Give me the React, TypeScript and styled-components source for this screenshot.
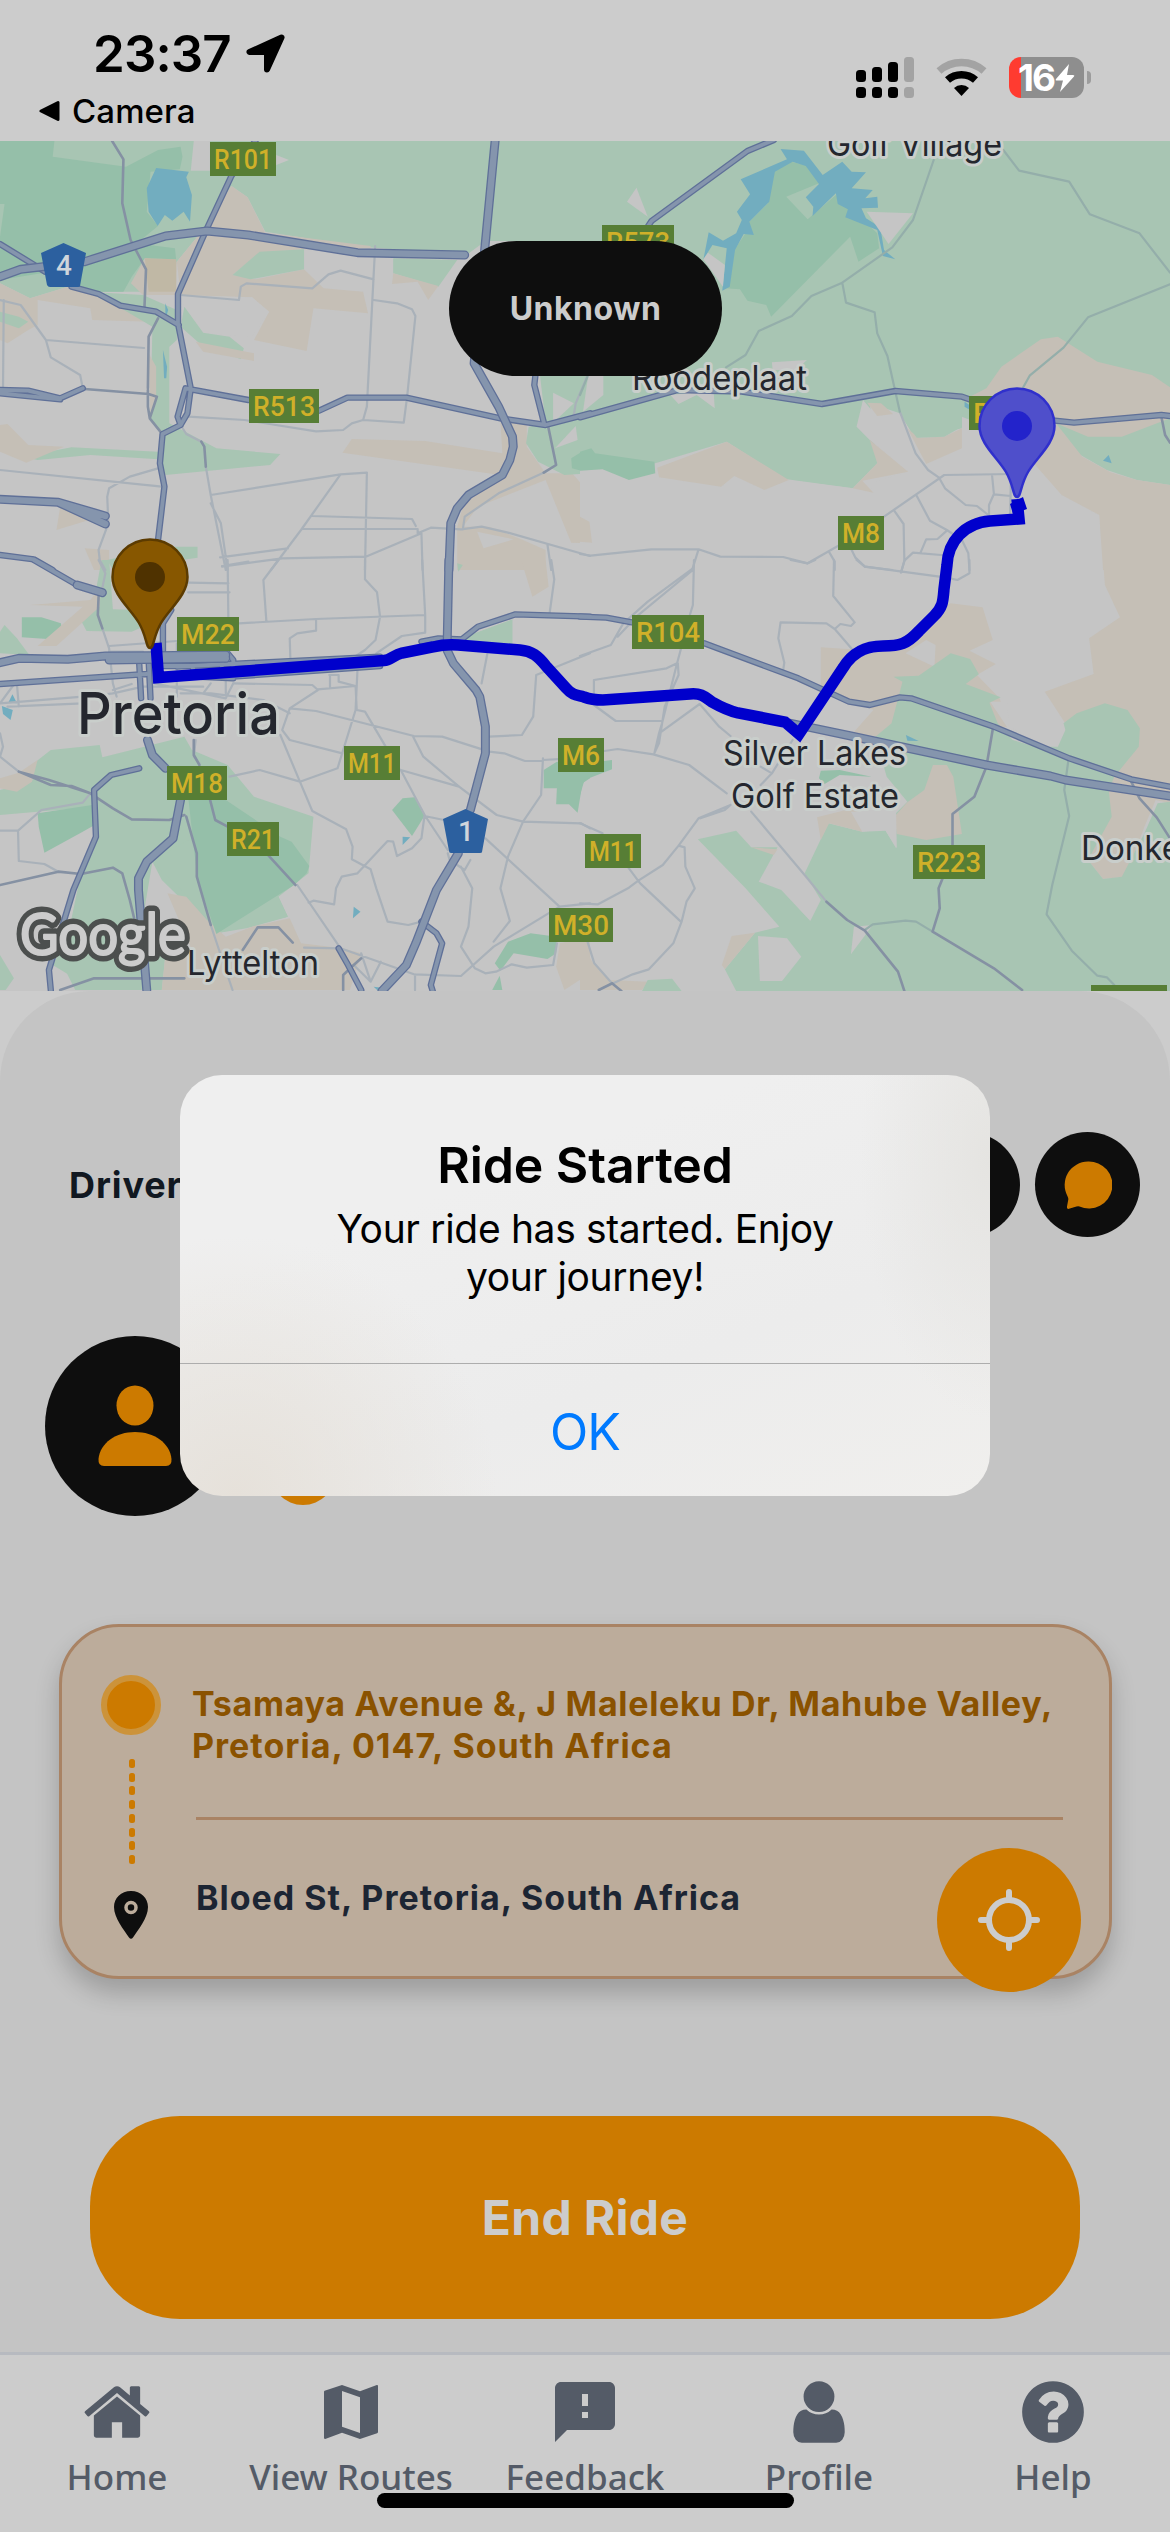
import React from 'react';
import styled, { createGlobalStyle } from 'styled-components';

const GlobalStyle = createGlobalStyle`
  * { box-sizing: border-box; }
  body { margin: 0; background: #cccccc; font-family: Inter, "Liberation Sans", sans-serif; }
`;

const Screen = styled.div`
  position: relative;
  display: flex;
  flex-direction: column;
  width: 1170px;
  height: 2532px;
  overflow: hidden;
  background: #cccccc;
`;

/* ---------- status bar ---------- */

const StatusBar = styled.header`
  display: flex;
  justify-content: space-between;
  height: 141px;
  padding: 0 79px 0 39px;
  color: #000;
`;

const StatusLeft = styled.div`
  display: flex;
  flex-direction: column;
  padding-top: 28px;
`;

const Clock = styled.div`
  display: flex;
  align-items: center;
  gap: 15px;
  height: 52px;
  padding-left: 54px;
  font-size: 51px;
  font-weight: 600;
  line-height: 52px;
  letter-spacing: -0.9px;
`;

const BackLink = styled.div`
  display: flex;
  align-items: center;
  gap: 12px;
  height: 46px;
  margin-top: 8px;
  font-size: 33px;
  font-weight: 500;
  line-height: 46px;
  letter-spacing: 0.1px;
`;

const StatusRight = styled.div`
  display: flex;
  align-items: flex-start;
  gap: 22px;
  padding-top: 57px;
`;

const Battery = styled.div`
  display: flex;
  align-items: center;
  gap: 3px;
`;

const BatteryBody = styled.div`
  display: flex;
  align-items: center;
  justify-content: center;
  gap: 1px;
  width: 75px;
  height: 41px;
  border-radius: 12px;
  background: linear-gradient(90deg, #ff3b30 12px, #8e8e8e 12px);
  color: #fff;
  font-size: 37px;
  font-weight: 700;
  letter-spacing: -2px;
`;

const BatteryCap = styled.span`
  width: 4px;
  height: 13px;
  border-radius: 0 6px 6px 0;
  background: #9c9c9c;
`;

/* ---------- map ---------- */

const MapPane = styled.section`
  position: relative;
  height: 850px;
  background: #c5c5c5;
  overflow: hidden;
  svg { display: block; }
`;

const MapPill = styled.div`
  position: absolute;
  top: 100px;
  left: 449px;
  display: flex;
  align-items: center;
  justify-content: center;
  width: 273px;
  height: 135px;
  border-radius: 68px;
  background: #0e0e0e;
  color: #cccccc;
  font-size: 32px;
  font-weight: 700;
  letter-spacing: 0.5px;
`;

type Tile = 'nw' | 'ne' | 'sw' | 'se';

const tileShift: Record<Tile, string> = {
  nw: 'translate(0 -1)',
  ne: 'translate(580 -1)',
  sw: 'translate(0 419)',
  se: 'translate(580 419)',
};

const tint = {
  green: '#a8c5b3',
  forest: '#95bfa9',
  sand: '#c5bfb6',
  ochre: '#c0b8a5',
  land: '#c5c5c5',
  water: '#72adbf',
};

type Area = [Tile, keyof typeof tint, string];

const areas: Area[] = [
  ['nw', 'green', '0,0 1568,0 1568,303 1290,303 1240,345 960,320 705,275 658,172 615,138 545,262 470,365 450,455 330,455 230,455 180,440 80,475 0,430'],
  ['nw', 'forest', '0,0 145,0 140,50 335,80 420,30 480,20 485,50 478,88 400,95 390,215 420,258 385,290 360,310 465,325 468,358 385,355 350,410 328,455 230,455 110,400 0,420'],
  ['nw', 'green', '0,192 12,192 0,290'],
  ['nw', 'land', '515,3 558,3 558,92 507,92'],
  ['nw', 'land', '734,45 768,60 734,75'],
  ['nw', 'sand', '545,262 615,138 658,172 705,278 985,318 985,325 808,328 690,338 618,405 680,418 808,388 860,445 965,455 978,520 833,505 815,633 675,600 715,515 670,472 480,465 470,365'],
  ['nw', 'sand', '385,355 470,365 468,465 380,465 348,430'],
  ['nw', 'ochre', '385,355 468,358 468,455 395,455'],
  ['nw', 'green', '690,335 808,328 808,388 665,418 618,405'],
  ['nw', 'land', '480,468 670,472 715,515 670,590 540,580 490,500'],
  ['nw', 'sand', '0,430 80,475 180,440 250,460 315,495 400,545 245,540 240,505 100,480 100,555 75,570 20,610 0,600'],
  ['nw', 'green', '0,515 50,530 75,545 50,565 0,545'],
  ['nw', 'green', '230,455 380,465 470,510 470,600 450,620 450,850 500,880 575,925 745,942 718,975 440,1005 420,940 430,880 400,840 405,560 315,500'],
  ['nw', 'green', '490,500 540,578 610,590 648,625 640,658 530,610 480,560'],
  ['nw', 'sand', '520,605 675,640 675,663 540,635'],
  ['nw', 'sand', '395,640 415,680 415,770 400,840'],
  ['nw', 'green', '60,950 190,922 420,935 420,958 240,945 100,960'],
  ['nw', 'sand', '0,855 20,852 75,915 170,920 70,968 0,935'],
  ['nw', 'sand', '935,897 1130,903 1335,940 1330,845 1400,850 1400,920 1450,1000 1520,1000 1568,1060 1568,1210 1518,1208 1450,1020 1270,1100 1230,1160 1300,1160 1390,1200 1450,1230 1450,1290 1215,1290 1215,1160 1240,1060 1330,1005 910,938'],
  ['nw', 'land', '1268,1175 1365,1198 1285,1225'],
  ['nw', 'green', '1435,705 1568,705 1568,1000 1500,1005 1430,965 1398,910 1405,860 1450,850'],
  ['nw', 'land', '1470,758 1525,790 1470,848'],
  ['nw', 'land', '1530,858 1535,900 1475,925'],
  ['nw', 'forest', '1568,920 1518,955 1520,985 1568,1000'],
  ['nw', 'green', '1045,355 1215,360 1165,440 1045,400'],
  ['nw', 'sand', '1045,400 1165,438 1138,480 1110,425 1042,432'],
  ['nw', 'sand', '160,1100 280,1125 150,1170'],
  ['nw', 'sand', '225,1225 290,1230 290,1290 250,1290'],
  ['nw', 'green', '440,1220 525,1220 525,1253 300,1290 285,1260'],
  ['nw', 'water', '415,84 502,95 495,112 510,165 505,245 488,215 458,242 438,225 419,258 395,215 390,145'],
  ['nw', 'water', '439,490 447,510 440,535'],
  ['nw', 'water', '433,630 444,680 442,715 436,715'],

  ['ne', 'green', '0,0 1568,0 1568,1035 1480,1020 1400,990 1330,945 1265,860 1180,960 890,895 850,820 770,790 790,970 725,1045 550,1020 390,905 200,970 0,990'],
  ['ne', 'land', '0,990 60,988 130,1020 200,1000 210,1012 375,1040 410,1008 490,1050 550,1018 725,1045 780,1058 770,1030 872,995 770,900 735,860 752,780 788,828 848,820 890,895 1015,865 1015,830 1060,850 1210,975 1280,1065 1380,1125 1390,1290 0,1290'],
  ['ne', 'sand', '205,983 390,905 555,1020 490,1050 410,1008 375,1040 210,1012'],
  ['ne', 'sand', '770,900 872,995 750,1022 780,1058 725,1045 790,970'],
  ['ne', 'sand', '763,788 800,790 832,822 790,828'],
  ['ne', 'sand', '870,865 900,893 968,890 1015,865 1015,925 920,972'],
  ['ne', 'green', '848,820 1015,820 1015,860 968,890 895,893'],
  ['ne', 'sand', '1040,768 1080,745 1120,680 1225,598 1270,590 1375,665 1520,705 1568,742 1568,835 1440,890 1350,890 1265,850 1335,950 1410,997 1480,1020 1568,1035 1568,1290 1390,1290 1380,1125 1280,1065 1210,975 1130,850'],
  ['ne', 'sand', '0,1130 25,1145 32,1208 0,1205'],
  ['ne', 'forest', '0,935 30,925 40,940 198,965 200,1000 130,1020 60,988 0,992'],
  ['ne', 'forest', '515,95 560,65 600,75 635,130 548,170 605,238 680,165 790,280 795,325 740,365 718,290 508,530 495,495 445,482 425,448 385,445 410,330 440,280 450,245 500,190'],
  ['ne', 'water', '533,27 595,32 645,105 697,65 722,95 760,97 722,145 778,150 758,175 790,170 792,203 748,205 760,235 798,262 808,330 838,358 805,348 790,270 705,232 712,208 685,192 680,160 618,228 620,200 600,172 635,132 600,78 565,65 518,95 503,185 450,245 462,285 435,282 412,330 398,440 378,452 390,325 352,315 328,358 342,277 380,302 415,280 430,240 417,215 452,163 427,118 550,58'],
  ['ne', 'land', '150,143 180,230 125,185'],
  ['ne', 'land', '762,215 885,220 820,312'],
  ['ne', 'land', '340,338 385,375 380,440 328,358'],
  ['ne', 'land', '22,705 62,705 62,765 8,815'],
  ['ne', 'land', '510,667 603,660 575,690 512,690'],
  ['ne', 'land', '240,765 355,750 358,805 310,765 262,792'],
  ['ne', 'water', '1405,945 1413,970 1390,962'],
  ['ne', 'water', '1022,785 1035,795 1033,808 1022,800'],

  ['sw', 'green', '0,690 85,665 90,610 135,570 265,555 272,592 490,530 510,570 605,615 675,710 833,770 820,940 740,1010 765,1070 655,1105 575,1120 430,960 405,905 385,1040 380,1290 250,1290 140,1215 180,1130 215,940 250,870 255,740 100,755 0,765'],
  ['sw', 'forest', '100,760 245,735 260,790 215,818 118,878 103,800'],
  ['sw', 'green', '270,1100 440,1180 430,1290 200,1290 160,1200'],
  ['sw', 'green', '405,905 500,1010 560,1095 575,1120 660,1100 765,1070 740,1010 620,900 500,840'],
  ['sw', 'sand', '445,1000 495,1010 550,1080 600,1130 670,1100 770,1075 800,1150 910,1165 960,1180 930,1290 430,1290 440,1180 510,1170'],
  ['sw', 'forest', '500,710 600,720 745,830 775,845 822,918 815,940 782,975 575,1122 525,960'],
  ['sw', 'green', '270,0 290,0 300,148 370,150 380,200 350,215 230,213 217,185 250,120'],
  ['sw', 'forest', '58,172 110,172 162,190 165,240 58,232'],
  ['sw', 'green', '12,195 45,235 78,285 0,280 0,215'],
  ['sw', 'sand', '80,135 240,120 268,80 265,140 150,258 100,258 220,140'],
  ['sw', 'sand', '0,655 50,638 100,600 85,665 45,695 0,685'],
  ['sw', 'green', '1225,235 1362,178 1362,258 1250,250'],
  ['sw', 'sand', '1385,0 1450,0 1458,80 1415,110'],
  ['sw', 'green', '1215,10 1230,15 1218,35'],
  ['sw', 'forest', '1070,715 1102,712 1128,768 1095,828 1042,750'],
  ['sw', 'forest', '1445,630 1480,605 1568,615 1568,655 1548,670 1535,758 1512,733 1478,733 1480,685 1445,685'],
  ['sw', 'forest', '1350,1145 1410,1120 1480,1130 1478,1180 1455,1197 1365,1180 1330,1232 1315,1210'],
  ['sw', 'forest', '1328,1247 1335,1290 1308,1290'],
  ['sw', 'sand', '1488,1150 1568,1130 1568,1240 1500,1290 1478,1220'],
  ['sw', 'green', '0,1185 37,1255 15,1290 0,1290'],
  ['sw', 'water', '33,403 45,430 22,428'],
  ['sw', 'water', '5,438 34,450 28,480 8,462'],
  ['sw', 'water', '1070,830 1090,832 1070,855'],
  ['sw', 'water', '940,1040 958,1055 938,1075'],
  ['sw', 'water', '993,1280 1015,1283 1005,1293'],

  ['se', 'sand', '1390,0 1568,0 1568,730 1530,720 1500,800 1450,950 1390,957 1350,900 1410,770 1405,690 1235,395 1365,342 1353,235 1435,172 1395,75'],
  ['se', 'sand', '640,262 720,268 860,250 945,150 985,130 1070,142 1097,240 1035,272 1105,312 1055,345 1115,415 1140,500 800,530 725,520 780,450 640,380'],
  ['se', 'land', '865,280 920,240 945,255 942,320'],
  ['se', 'land', '1090,425 1135,425 1140,500 1210,540 1170,560'],
  ['se', 'green', '833,350 900,347 985,280 1037,297 1060,343 1025,372 1118,412 1088,428 1110,490 1150,540 1210,560 1270,560 1290,510 1285,490 1320,460 1395,430 1455,450 1488,505 1485,560 1420,650 1405,690 1413,770 1350,900 1390,957 1440,950 1500,820 1535,730 1568,725 1568,1293 415,1293 385,1228 465,1118 530,1100 440,985 313,838 415,812 455,862 525,862 475,965 535,990 612,1083 640,1020 597,940 660,790 750,815 810,808 840,865 830,770 870,725 815,650 785,530 828,490 857,365'],
  ['se', 'sand', '938,615 975,615 992,650 1015,822 920,840 842,822 835,770 870,727 915,690'],
  ['se', 'sand', '630,772 740,740 750,815 662,790 640,840'],
  ['se', 'land', '720,755 840,755 842,865 812,812 750,815'],
  ['se', 'land', '473,1128 550,1135 588,1190 537,1263 478,1263'],
  ['se', 'land', '728,1100 778,1095 720,1183'],
  ['se', 'sand', '403,1128 465,1118 385,1228 377,1215'],
  ['se', 'sand', '455,862 525,868 515,885'],
  ['se', 'forest', '640,632 690,630 775,650 690,645 650,672 635,655'],
  ['se', 'forest', '0,612 85,600 85,628 12,660 0,705'],
  ['se', 'sand', '0,1140 35,1210 80,1260 180,1265 165,1290 0,1290'],
  ['se', 'green', '180,1260 245,1256 270,1293 165,1293'],
  ['se', 'water', '866,525 900,543 870,542'],
];

type Road = [Tile, 'minor' | 'medium' | 'faint' | 'major' | 'highway', string];

const roads: Road[] = [
  ['nw', 'minor', 'M0,480 L55,495 122,600 135,652 213,705 220,745 M10,480 L8,745 M122,600 L383,624 M480,465 L635,480 640,440 655,430 830,445 873,403 905,392 993,418 M997,318 L975,800 965,840 M993,480 L1055,490 1095,508 1104,528 1082,770 1073,848 965,840 935,850 912,870 840,874 650,840 500,830'],
  ['nw', 'medium', 'M298,3 L328,58 325,190 347,300 388,388 384,500 M420,535 L395,590 393,745 M225,747 L395,762 417,770 398,835 430,880 M393,750 V800 L398,835'],
  ['nw', 'minor', 'M0,990 L430,1040 M480,855 L495,882 535,905 M547,980 L560,1065 600,1290 M560,1090 L587,1150 605,1290 M560,1065 L905,1003 975,998 970,1290 M905,1003 L800,1170 720,1290 M830,1128 L1095,1137 1105,1158 M805,1167 H1110 V1180 M585,1252 L765,1225 M590,1280 L750,1255 972,1250 1120,1180 M1120,1180 L1123,1290 M1110,1180 L1145,1163 1225,1168 1280,1160 1350,1178 1568,1248 M420,985 L345,1010 290,1045 285,1070 288,1150 262,1230 265,1260 280,1290 M1455,1215 L1465,1290 M1450,995 L1325,1060 1235,1130 1230,1168 M1560,710 L1530,790 1525,825'],
  ['nw', 'medium', 'M535,905 L543,920 547,980 M1457,860 L1478,975 1445,998'],
  ['nw', 'major', 'M0,312 L120,395 M190,440 L262,462 320,497 415,515 475,555 M680,0 L615,108 548,270 473,462 V550 L507,745 498,820 480,855 472,830 493,745 660,780 M848,812 L923,773 1080,773 1330,835 1450,855 1568,820 M0,750 L75,752 160,775 220,745 M0,760 L160,778 M480,855 L432,882 425,970 437,1040 420,1200 M0,1245 L90,1258 140,1290 M1423,705 L1420,735 1447,855'],
  ['nw', 'highway', 'M0,410 L55,388 115,380 M225,365 L440,288 550,273 660,285 950,338 1235,345 M1316,0 L1288,330 1260,670 1325,800 1362,890 1364,920 1355,960 1335,1005 1245,1065 1215,1105 1198,1150 1193,1290 M0,1078 L155,1087 280,1128 M155,1087 L280,1152'],

  ['ne', 'faint', 'M940,60 L885,240 830,322 697,428 615,468 563,528 475,573 440,645 388,682 M697,428 L707,488 783,517 790,580 817,648 837,750 850,815 M1125,30 L1167,92 1300,125 1355,223 1487,280 1568,398 M1568,433 L1350,532 1285,623 1195,707 1178,742 M20,710 L0,765'],
  ['ne', 'minor', 'M850,815 L892,940 925,990 957,1015 M808,1130 L968,1005 1150,1002 M955,1015 L970,1045 1025,1095 1055,1098 1085,1125 M1095,1005 L1100,1062 1087,1095 V1130 M1100,1063 L1145,1068 M895,1068 L930,1142 975,1170 1015,1200 1032,1240 1035,1290 M835,1112 L860,1152 862,1262 855,1290 M862,1262 L885,1238 960,1245 M905,1238 L920,1198 950,1197 975,1172 M0,1242 L28,1247 190,1228 315,1228 373,1250 540,1251 605,1270 690,1215 M315,1228 L298,1290 M663,1238 L677,1265 V1290 M722,1230 L732,1253 757,1280 830,1290 M1145,1030 L1143,1130'],
  ['ne', 'medium', 'M1545,830 L1555,885 1568,908'],
  ['ne', 'major', 'M515,0 L445,33 190,243 180,260 M0,832 L260,750 430,755 643,792 838,753 1015,770 1040,780 M1262,842 L1313,848 1545,825 1568,828'],

  ['sw', 'minor', 'M605,0 L607,190 M500,68 L607,70 M500,97 H610 M590,18 L660,5 M740,0 L700,60 708,185 M970,0 V58 L1002,97 1010,170 998,240 970,270 930,300 M1122,0 L1130,165 840,177 635,190 M840,177 V212 L790,220 770,235 772,310 M1130,165 V218 L1068,228 1000,280 M1465,0 L1473,58 1460,165 M290,258 L470,243 M272,205 L290,265 300,370 310,410 M0,430 L220,410 M20,440 L220,430 M38,372 L0,430 M45,372 L50,440 M620,370 L830,375 845,390 770,445 840,453 1100,528 1175,530 1300,575 1340,580 1395,603 1568,592 M845,388 L945,378 948,450 970,455 1025,560 M875,345 H900 V365 L945,378 M877,345 V380 M950,330 L945,450 897,625 797,665 690,630 610,650 M797,665 L830,753 920,808 937,860 935,898 985,928 1000,985 1030,1085 1085,1095 1120,1085 M745,525 L797,665 M770,445 L750,510 770,540 910,580 M1098,530 L1125,590 1220,680 1320,765 1390,785 1545,790 1568,805 M1065,630 L1220,680 M1065,630 L1130,768 1190,870 M1128,768 L1180,780 M1128,768 L1120,835 1095,865 1055,888 1045,845 1030,843 950,940 908,950 893,985 888,1033 833,1022 820,1028 M1295,282 L1280,370 M1300,530 L1387,525 1417,470 1425,345 1568,280 M1443,595 L1438,705 1390,785 1350,890 1330,985 1355,1083 1312,1145 M1290,835 L1487,1040 1312,1160 1225,1248 1100,1243 905,1165 808,1163 M1487,1040 L1568,1030 M1225,920 L1255,985 1245,1100 1225,1160 1262,1225 1290,1240 1318,1235 1360,1213 1400,1223 1470,1215 1480,1150 M1190,880 L1195,900 1235,930 1250,900 M0,812 H48 L110,750 220,728 240,700 M48,815 L50,903 118,912 155,935 M0,520 L8,560 0,590 50,635 M790,975 L905,1165 M520,540 L515,590 530,610 M560,1095 L600,1230 618,1290 M960,1180 L985,1265 1012,1205 M940,1215 L985,1265 M1103,1243 V1290'],
  ['sw', 'minor', 'M262,0 L280,40 270,95 M300,400 L380,380 540,380 M410,370 L600,415 620,370 M470,250 V410 M490,280 V300 M540,400 L560,370 M480,400 H560 L700,420 770,460 M600,330 V400 M230,410 L300,400 M290,275 H380 M300,390 L350,372'],
  ['sw', 'medium', 'M262,110 L260,165 272,205 M0,975 L155,935 215,942 300,923 325,940 345,1020 365,1115 M160,1290 L250,1255 490,1255 M50,635 L130,660 240,700 300,745 350,778 450,780 490,765 M50,635 L135,675 190,678 240,700 M558,718 L572,780 605,800 M712,885 L785,975 M495,770 L523,880 V950 L560,1095 M645,1170 L685,1102 740,1102 778,1148 M515,540 V585 L530,615 M912,1290 V1245 L940,1215 960,1195'],
  ['sw', 'major', 'M433,185 V300 M455,150 L433,190 M605,280 L620,300 V340 M590,285 V330 M0,372 L390,342 M370,310 L375,415 M395,300 L400,415 M420,318 H510 L518,340 M430,345 L620,355 M470,320 L1010,290 M620,350 L1010,318 M90,0 L205,75 270,98 M1225,240 L1270,200 1370,163 1568,170 M1120,245 L1165,235 1230,238 M370,625 L295,645 250,690 255,830 195,990 130,1230 135,1290 M900,1165 L925,1215 960,1290 M1120,1085 L1160,1120 1175,1150 1145,1275 1150,1293'],
  ['sw', 'highway', 'M0,308 L50,295 180,298 280,288 400,287 600,285 M290,300 L600,295 M392,540 L405,585 440,625 M480,718 L460,835 390,905 368,955 V990 L390,1290 M1193,0 L1188,270 1205,310 1265,390 1275,410 1290,500 1290,580 1250,750 M1218,880 L1160,990 1105,1150 1080,1215 1015,1293 M205,75 L272,98'],

  ['se', 'minor', 'M303,0 L300,135 292,165 M300,25 L180,125 115,190 82,255 0,288 M300,30 L150,170 100,230 M268,268 L258,310 218,490 210,520 198,578 M260,310 L262,345 225,440 210,550 198,578 M258,310 L230,325 37,360 V435 L95,483 H215 M213,518 L318,432 370,500 400,528 M675,0 L673,108 730,187 720,198 692,192 677,207 655,190 533,187 527,235 543,308 540,330 M677,207 L725,270 M735,0 L757,20 975,53 1003,60 1035,40 V0 M863,0 L853,38 M560,0 L605,10 625,0 M65,573 L100,567 195,583 290,615 390,700 M565,540 L510,640 480,675 M480,620 L510,640 M400,735 L315,775 262,857 220,915 155,962 130,983 48,1033 0,1030 M262,857 L278,862 280,920 305,985 283,1025 270,1085 248,1150 183,1228 140,1243 50,1290 M0,790 L60,820 M128,922 L160,970 268,1085 M455,755 L597,945 655,1025 M20,1145 L38,1210 85,1270 M400,735 L385,750 320,775'],
  ['se', 'faint', 'M1298,600 L1287,690 1300,768 1255,975 1240,1063 1307,1172 1375,1247 1400,1252 1420,1275 M757,1110 L778,1093 865,1082 893,1085 937,1115'],
  ['se', 'medium', 'M655,1025 L710,1080 757,1112 845,1235 862,1293 M1097,508 L1080,620 1048,710 990,762 V855 M963,957 L953,985 956,1045 937,1115 1100,1225 1175,1290 M1465,665 L1487,715 1533,773 1568,835 M85,1270 L110,1293 M85,1270 L50,1290'],
  ['se', 'major', 'M0,170 L70,173 138,187 M330,250 L580,355 715,425 770,435 850,412 880,415 1100,500 1300,595 1465,658 1568,680'],
  ['se', 'highway', 'M560,490 L720,528 1080,615 1250,648 1290,660 1568,708'],
];

const roadPaint: Record<Road[1], { casing?: [string, number]; fill: [string, number] }> = {
  minor: { fill: ['#a9b1b9', 2.2] },
  faint: { fill: ['#94aeaa', 2.2] },
  medium: { fill: ['#8591a3', 2.6] },
  major: { casing: ['#5f7098', 6.4], fill: ['#8595ad', 3.8] },
  highway: { casing: ['#5f7098', 9], fill: ['#8595ad', 6.4] },
};

const shields: [string, number, number, number][] = [
  ['R101', 210, 1, 66], ['R513', 249, 248, 70], ['R573', 602, 84, 72], ['M8', 838, 375, 46],
  ['R5', 969, 255, 44], ['M22', 177, 476, 62], ['M11', 344, 605, 56], ['M18', 167, 625, 60],
  ['R21', 227, 681, 52], ['M6', 558, 597, 46], ['R104', 632, 474, 72], ['M11', 585, 693, 56],
  ['M30', 549, 767, 64], ['R223', 913, 704, 72], ['', 1091, 844, 76],
];

const places: [string, number, number, number, number][] = [
  ['Golf Village', 827, 15, 175, 34],
  ['Roodeplaat', 632, 249, 175, 34],
  ['Silver Lakes', 723, 624, 183, 34],
  ['Golf Estate', 731, 667, 168, 34],
  ['Donkerhoek', 1081, 719, 190, 34],
  ['Lyttelton', 187, 834, 132, 34],
  ['Pretoria', 77, 593, 203, 57],
];

const MapText = styled.text<{ $size: number }>`
  font-family: Inter, "Liberation Sans", sans-serif;
  font-size: ${(p) => p.$size}px;
  font-weight: ${(p) => (p.$size > 40 ? 500 : 400)};
  fill: #24272e;
  stroke: #c9cecb;
  stroke-width: 6px;
  stroke-linejoin: round;
  paint-order: stroke;
`;

const ShieldText = styled.text`
  font-family: Roboto, sans-serif;
  font-size: 27px;
  font-weight: 500;
  fill: #d0b029;
`;

const BadgeText = styled.text`
  font-family: Roboto, sans-serif;
  font-size: 28px;
  font-weight: 500;
  fill: #cfd5dc;
  text-anchor: middle;
`;

const LogoText = styled.text`
  font-family: Lato, sans-serif;
  font-size: 58px;
  font-weight: 400;
  fill: #cccccc;
  stroke: #4c4f4e;
  stroke-width: 13px;
  stroke-linejoin: round;
  paint-order: stroke;
`;

const LogoFace = styled(LogoText)`
  stroke: #cccccc;
  stroke-width: 2px;
`;

const TileGroup = ({ tile, children }: { tile: Tile; children: React.ReactNode }) => (
  <g transform={`${tileShift[tile]} scale(0.37628 0.33333)`}>{children}</g>
);

const Pin = ({ x, y, fill, edge, dot }: { x: number; y: number; fill: string; edge: string; dot: string }) => (
  <g transform={`translate(${x} ${y})`}>
    <path
      d="M0 71 C-4 71 -3 60 -11 46 C-19 32 -37.5 18 -37.5 0 A37.5 37.5 0 0 1 37.5 0 C37.5 18 19 32 11 46 C3 60 4 71 0 71Z"
      fill={fill} stroke={edge} strokeWidth="2.5"
    />
    <circle r="15" fill={dot} />
  </g>
);

const RouteMap = () => (
  <svg width="1170" height="850" viewBox="0 0 1170 850">
    {areas.map(([tile, kind, points], i) => (
      <TileGroup key={i} tile={tile}><polygon points={points} fill={tint[kind]} /></TileGroup>
    ))}
    {(['minor', 'faint', 'medium', 'major', 'highway'] as const).map((kind) =>
      (['casing', 'fill'] as const).map((layer) => {
        const paint = roadPaint[kind][layer];
        if (!paint) return null;
        return roads.filter((r) => r[1] === kind).map(([tile, , d], i) => (
          <TileGroup key={kind + layer + i} tile={tile}>
            <path d={d} fill="none" stroke={paint[0]} strokeWidth={paint[1]} strokeLinecap="round" strokeLinejoin="round" vectorEffect="non-scaling-stroke" />
          </TileGroup>
        ));
      }),
    )}
    {places.map(([name, x, y, w, size]) => (
      <MapText key={name} x={x} y={y} textLength={w} lengthAdjust="spacingAndGlyphs" $size={size}>{name}</MapText>
    ))}
    {shields.map(([name, x, y, w], i) => (
      <g key={i}>
        <rect x={x} y={y} width={w} height="34" fill="#577e35" />
        {name && <ShieldText x={x + 4} y={y + 26.5} textLength={w - 8} lengthAdjust="spacingAndGlyphs">{name}</ShieldText>}
      </g>
    ))}
    <path d="M63.500 102 L86 112 L80 145 Q80 146 78 146 H50 Q48 146 47 144 L41 112Z" fill="#2c609f" />
    <BadgeText x="64" y="134">4</BadgeText>
    <path d="M465.500 668 L488 678 L482 711 Q482 712 480 712 H451 Q449 712 449 710 L443 678Z" fill="#2c609f" />
    <BadgeText x="466" y="700">1</BadgeText>
    <path
      d="M156 502 L158.500 536.500 L384 519.500 C390 519 394 514 402 512 L433 506 Q445 503 458 504 L520 509 C532 510 538 515 546 525 L566 547 C573 555 577 554 584 556 Q592 559 603 559 L690 553 C702 552 705 556 712 561 Q726 569 738 572 L785 581 L799 593 L843 527 C855 507 872 505 883 505 C900 505 907 503 919 490 L934 475 C943 466 943 460 944 448 L947 424 C948 400 965 382 990 380 L1019 378 L1017 358"
      fill="none" stroke="#0000cc" strokeWidth="11.500" strokeLinejoin="miter"
    />
    <path d="M1010 363 L1023 356 L1027 368 L1013 373Z" fill="#0000cc" />
    <Pin x={150} y={436} fill="#875700" edge="#5c3b00" dot="#4f3200" />
    <Pin x={1017} y={285} fill="#4f4fcb" edge="#3030cc" dot="#2323cb" />
    <LogoText x="20" y="814" textLength="166" lengthAdjust="spacingAndGlyphs" aria-hidden="true">Google</LogoText>
    <LogoFace x="20" y="814" textLength="166" lengthAdjust="spacingAndGlyphs">Google</LogoFace>
  </svg>
);

/* ---------- sheet ---------- */

const Sheet = styled.main`
  display: flex;
  flex-direction: column;
  height: 1361px;
  border-radius: 90px 90px 0 0;
  background: #c4c4c4;
`;

const DriverHeader = styled.div`
  display: flex;
  align-items: center;
  gap: 15px;
  height: 105px;
  margin-top: 141px;
  padding: 0 30px 0 69px;
`;

const DriverTitle = styled.h2`
  flex: 1;
  margin: 0;
  color: #111821;
  font-size: 36px;
  font-weight: 700;
  letter-spacing: 0.9px;
`;

const Disc = styled.div<{ $size: number }>`
  display: flex;
  align-items: center;
  justify-content: center;
  flex: none;
  width: ${(p) => p.$size}px;
  height: ${(p) => p.$size}px;
  border-radius: 50%;
  background: #0e0e0e;
`;

const DriverRow = styled.div`
  display: flex;
  align-items: center;
  gap: 45px;
  height: 180px;
  margin-top: 99px;
  padding-left: 45px;
`;

const RatingDot = styled.span`
  width: 66px;
  height: 66px;
  margin-top: 92px;
  border-radius: 50%;
  background: #cc7a00;
`;

const TripCard = styled.section`
  position: relative;
  display: flex;
  height: 355px;
  margin: 108px 58px 0 59px;
  padding: 48px 44px 0 39px;
  border: 3px solid #a98364;
  border-radius: 60px;
  background: #bcac9b;
  box-shadow: 0 14px 24px rgba(0, 0, 0, 0.2);
`;

const TripRail = styled.div`
  display: flex;
  flex-direction: column;
  align-items: center;
  width: 60px;
`;

const StartDot = styled.span`
  width: 60px;
  height: 60px;
  border: 6px solid #cc933a;
  border-radius: 50%;
  background: #cc7a00;
`;

const Dashes = styled.div`
  display: flex;
  flex-direction: column;
  justify-content: space-between;
  height: 105px;
  margin: 24px 0 27px 2px;
`;

const Dash = styled.i`
  width: 6px;
  height: 9px;
  border-radius: 2.5px;
  background: #cc7a00;
`;

const TripText = styled.div`
  display: flex;
  flex-direction: column;
  flex: 1;
  padding: 8px 0 0 31px;
`;

const Address = styled.p<{ $tone: string; $indent?: number }>`
  margin: 0 0 0 ${(p) => p.$indent ?? 0}px;
  color: ${(p) => p.$tone};
  font-size: 34px;
  font-weight: 700;
  line-height: 42px;
  white-space: nowrap;
`;

const AddressLine = styled.span<{ $spacing: number }>`
  display: block;
  letter-spacing: ${(p) => p.$spacing}px;
`;

const TripRule = styled.hr`
  width: 867px;
  height: 3px;
  margin: 50px 0 57px 4px;
  border: 0;
  background: #a98364;
`;

const LocateButton = styled.button`
  position: absolute;
  right: 28px;
  bottom: -16px;
  display: flex;
  align-items: center;
  justify-content: center;
  width: 144px;
  height: 144px;
  padding: 0;
  border: 0;
  border-radius: 50%;
  background: #cc7a00;
`;

const EndRide = styled.button`
  height: 203px;
  margin: 137px 90px 0;
  border: 0;
  border-radius: 90px;
  background: #cc7a00;
  color: #cccccc;
  font-family: inherit;
  font-size: 48px;
  font-weight: 700;
  letter-spacing: 0.3px;
`;

/* ---------- tab bar ---------- */

const TabBar = styled.nav`
  position: relative;
  display: grid;
  grid-template-columns: repeat(5, 1fr);
  height: 180px;
  border-top: 3px solid #b7bac0;
  background: #cccccc;
`;

const Tab = styled.a`
  display: flex;
  flex-direction: column;
  align-items: center;
  padding-top: 21px;
  color: #545b67;
  font-family: "Noto Sans", sans-serif;
  font-size: 35px;
  font-weight: 500;
  line-height: 48px;
  white-space: nowrap;
  svg { display: block; margin-bottom: 5px; }
`;

const HomeIndicator = styled.div`
  position: absolute;
  left: 377px;
  bottom: 24px;
  width: 417px;
  height: 15px;
  border-radius: 8px;
  background: #000;
`;

const faHome = 'M1472 992v480q0 26-19 45t-45 19h-384v-384h-256v384h-384q-26 0-45-19t-19-45v-480q0-1 .5-3t.5-3l575-474 575 474q1 2 1 6zm223-69l-62 74q-8 9-21 11h-3q-13 0-21-7l-692-577-692 577q-12 8-24 7-13-2-21-11l-62-74q-8-10-7-23.500t11-21.500l719-599q32-26 76-26t76 26l244 204v-195q0-14 9-23t23-9h192q14 0 23 9t9 23v408l219 182q10 8 11 21.500t-7 23.500z';
const faUser = 'M1536 1399q0 109-62.500 187t-150.500 78h-854q-88 0-150.500-78t-62.500-187q0-85 8.500-160.500t31.500-152 58.500-131 94-89 134.500-34.500q131 128 313 128t313-128q76 0 134.500 34.500t94 89 58.500 131 31.500 152 8.500 160.500zm-256-887q0 159-112.500 271.500t-271.500 112.500-271.500-112.500-112.500-271.500 112.500-271.500 271.500-112.500 271.500 112.500 112.500 271.500z';
const faHelp = 'M1024 1376v-192q0-14-9-23t-23-9h-192q-14 0-23 9t-9 23v192q0 14 9 23t23 9h192q14 0 23-9t9-23zm256-672q0-88-55.500-163t-138.500-116-170-41q-243 0-371 213-15 24 8 42l132 100q7 6 19 6 16 0 25-12 53-68 86-92 34-24 86-24 48 0 85.500 26t37.500 59q0 38-20 61t-68 45q-63 28-115.500 86.500t-52.500 125.500v36q0 14 9 23t23 9h192q14 0 23-9t9-23q0-19 21.500-49.500t54.500-49.500q32-18 49-28.500t46-35 44.500-48 28-60.500 12.500-81zm384 192q0 209-103 385.500t-279.500 279.500-385.500 103-385.500-103-279.500-279.500-103-385.500 103-385.500 279.500-279.500 385.500-103 385.500 103 279.500 279.500 103 385.500z';
const mdMap = 'M15 19l-6-2.110V5l6 2.110zM20.600 3L15 5.100 9 3 3.200 4.950Q3 5.050 3 5.300V20.600Q3 21 3.400 21L9 18.900l6 2.100 5.700-1.950Q21 18.950 21 18.700V3.300Q21 2.900 20.600 3z';
const mdFeedback = 'M20 2H4c-1.100 0-2 .9-2 2v18l4-4h14c1.100 0 2-.9 2-2V4c0-1.100-.9-2-2-2zm-7 12h-2v-2h2v2zm0-4h-2V6h2v4z';

const tabs = [
  { label: 'Home', box: 1792, d: faHome },
  { label: 'View Routes', box: 24, d: mdMap },
  { label: 'Feedback', box: 24, d: mdFeedback },
  { label: 'Profile', box: 1792, d: faUser },
  { label: 'Help', box: 1792, d: faHelp },
];

/* ---------- alert ---------- */

const Alert = styled.div`
  position: absolute;
  top: 1075px;
  left: 180px;
  display: flex;
  flex-direction: column;
  width: 810px;
  height: 421px;
  border-radius: 42px;
  overflow: hidden;
  background:
    radial-gradient(circle at 7% 100%, #e6e1da 0, rgba(232, 228, 223, 0) 260px),
    radial-gradient(ellipse 130px 260px at 100% 20%, #e5e4e1 0, rgba(232, 231, 228, 0) 100%),
    linear-gradient(160deg, #efefef 30%, #ececec 65%, #f0efed 100%);
  color: #000;
  text-align: center;
`;

const AlertBody = styled.div`
  flex: 1;
  padding-top: 58px;
`;

const AlertTitle = styled.h1`
  margin: 0;
  font-size: 50px;
  font-weight: 600;
  line-height: 64px;
  letter-spacing: -0.1px;
`;

const AlertMessage = styled.p`
  margin: 8px 0 0;
  font-size: 39px;
  line-height: 48px;
  letter-spacing: -0.35px;
`;

const AlertAction = styled.button`
  height: 133px;
  padding: 3px 0 0;
  border: 0;
  border-top: 1px solid #adadad;
  background: transparent;
  color: #007aff;
  font-family: inherit;
  font-size: 50px;
  letter-spacing: -1px;
`;

export default function App() {
  return (
    <>
      <GlobalStyle />
      <Screen>
        <StatusBar>
          <StatusLeft>
            <Clock>
              23:37
              <svg width="40" height="40" viewBox="0 0 40 40">
                <path d="M35.500 3.500 L3.500 18 H21 V35.500Z" fill="#000" stroke="#000" strokeWidth="6" strokeLinejoin="round" />
              </svg>
            </Clock>
            <BackLink>
              <svg width="21" height="22" viewBox="0 0 21 22"><path d="M19 2.500 V19.500 L2 11Z" fill="#000" stroke="#000" strokeWidth="3" strokeLinejoin="round" /></svg>
              Camera
            </BackLink>
          </StatusLeft>
          <StatusRight>
            <svg width="58" height="41" viewBox="0 0 58 41">
              {[13, 10, 5, 0].map((top, i) => (
                <g key={i} fill={i === 3 ? '#a3a3a3' : '#000'}>
                  <rect x={i * 16} y={top} width="10" height={25 - top} rx="3.500" />
                  <rect x={i * 16} y="30" width="10" height="11" rx="3.500" />
                </g>
              ))}
            </svg>
            <svg width="51" height="41" viewBox="0 0 51 41">
              <path d="M3 14 A34 34 0 0 1 48 14" fill="none" stroke="#a3a3a3" strokeWidth="7.500" />
              <path d="M11.500 23 A21 21 0 0 1 39.500 23" fill="none" stroke="#000" strokeWidth="7.500" />
              <path d="M18 31 A11 11 0 0 1 33 31 L25.500 39Z" fill="#000" />
            </svg>
            <Battery>
              <BatteryBody>
                16
                <svg width="20" height="28" viewBox="0 0 20 28"><path d="M14 0 L1 15 Q0 16.500 2 16.500 H8 L5 28 L19 12.500 Q20 11 18 11 H12Z" fill="#fff" /></svg>
              </BatteryBody>
              <BatteryCap />
            </Battery>
          </StatusRight>
        </StatusBar>

        <MapPane>
          <RouteMap />
          <MapPill>Unknown</MapPill>
        </MapPane>

        <Sheet>
          <DriverHeader>
            <DriverTitle>Driver</DriverTitle>
            <Disc $size={105} />
            <Disc $size={105}>
              <svg width="48" height="48" viewBox="0 0 48 48">
                <path d="M24 0.500 A23.500 23.500 0 1 1 15.500 45.500 Q14 45 12.500 45.600 L5 47.800 Q2.500 48.300 3 45.500 L4.300 38.500 Q4.500 37 3.500 35.200 A23.500 23.500 0 0 1 24 0.500Z" fill="#cc7a00" />
              </svg>
            </Disc>
          </DriverHeader>
          <DriverRow>
            <Disc $size={180}>
              <svg width="74" height="82" viewBox="0 0 74 82">
                <ellipse cx="37" cy="20.500" rx="18.500" ry="20" fill="#cc7a00" />
                <path d="M6 81 Q0 81 0.500 74 C2 58 18 47 37 47 C56 47 72 58 73.500 74 Q74 81 68 81Z" fill="#cc7a00" />
              </svg>
            </Disc>
            <RatingDot />
          </DriverRow>
          <TripCard>
            <TripRail>
              <StartDot />
              <Dashes>{Array.from({ length: 8 }, (_, i) => <Dash key={i} />)}</Dashes>
              <svg width="34" height="48" viewBox="0 0 34 48">
                <path d="M17 0 C7 0 0 7 0 16 C0 27 10 39 15 46.500 Q17 49 19 46.500 C24 39 34 27 34 16 C34 7 27 0 17 0Z" fill="#0e0e0e" />
                <circle cx="17" cy="16.500" r="5" fill="none" stroke="#bcac9b" strokeWidth="3.500" />
              </svg>
            </TripRail>
            <TripText>
              <Address $tone="#8a5200">
                <AddressLine $spacing={0.68}>Tsamaya Avenue &amp;, J Maleleku Dr, Mahube Valley,</AddressLine>
                <AddressLine $spacing={1.02}>Pretoria, 0147, South Africa</AddressLine>
              </Address>
              <TripRule />
              <Address $tone="#1c2533" $indent={4}>
                <AddressLine $spacing={1}>Bloed St, Pretoria, South Africa</AddressLine>
              </Address>
            </TripText>
            <LocateButton>
              <svg width="64" height="64" viewBox="0 0 64 64" fill="none" stroke="#cccccc" strokeWidth="6" strokeLinecap="round">
                <circle cx="32" cy="32" r="20" />
                <path d="M32 4 V11 M32 53 V60 M4 32 H11 M53 32 H60" />
              </svg>
            </LocateButton>
          </TripCard>
          <EndRide>End Ride</EndRide>
        </Sheet>

        <TabBar>
          {tabs.map((tab) => (
            <Tab key={tab.label}>
              <svg width="72" height="72" viewBox={`0 0 ${tab.box} ${tab.box}`} fill="currentColor">
                <path fillRule="evenodd" d={tab.d} />
              </svg>
              {tab.label}
            </Tab>
          ))}
          <HomeIndicator />
        </TabBar>

        <Alert>
          <AlertBody>
            <AlertTitle>Ride Started</AlertTitle>
            <AlertMessage>Your ride has started. Enjoy<br />your journey!</AlertMessage>
          </AlertBody>
          <AlertAction>OK</AlertAction>
        </Alert>
      </Screen>
    </>
  );
}
